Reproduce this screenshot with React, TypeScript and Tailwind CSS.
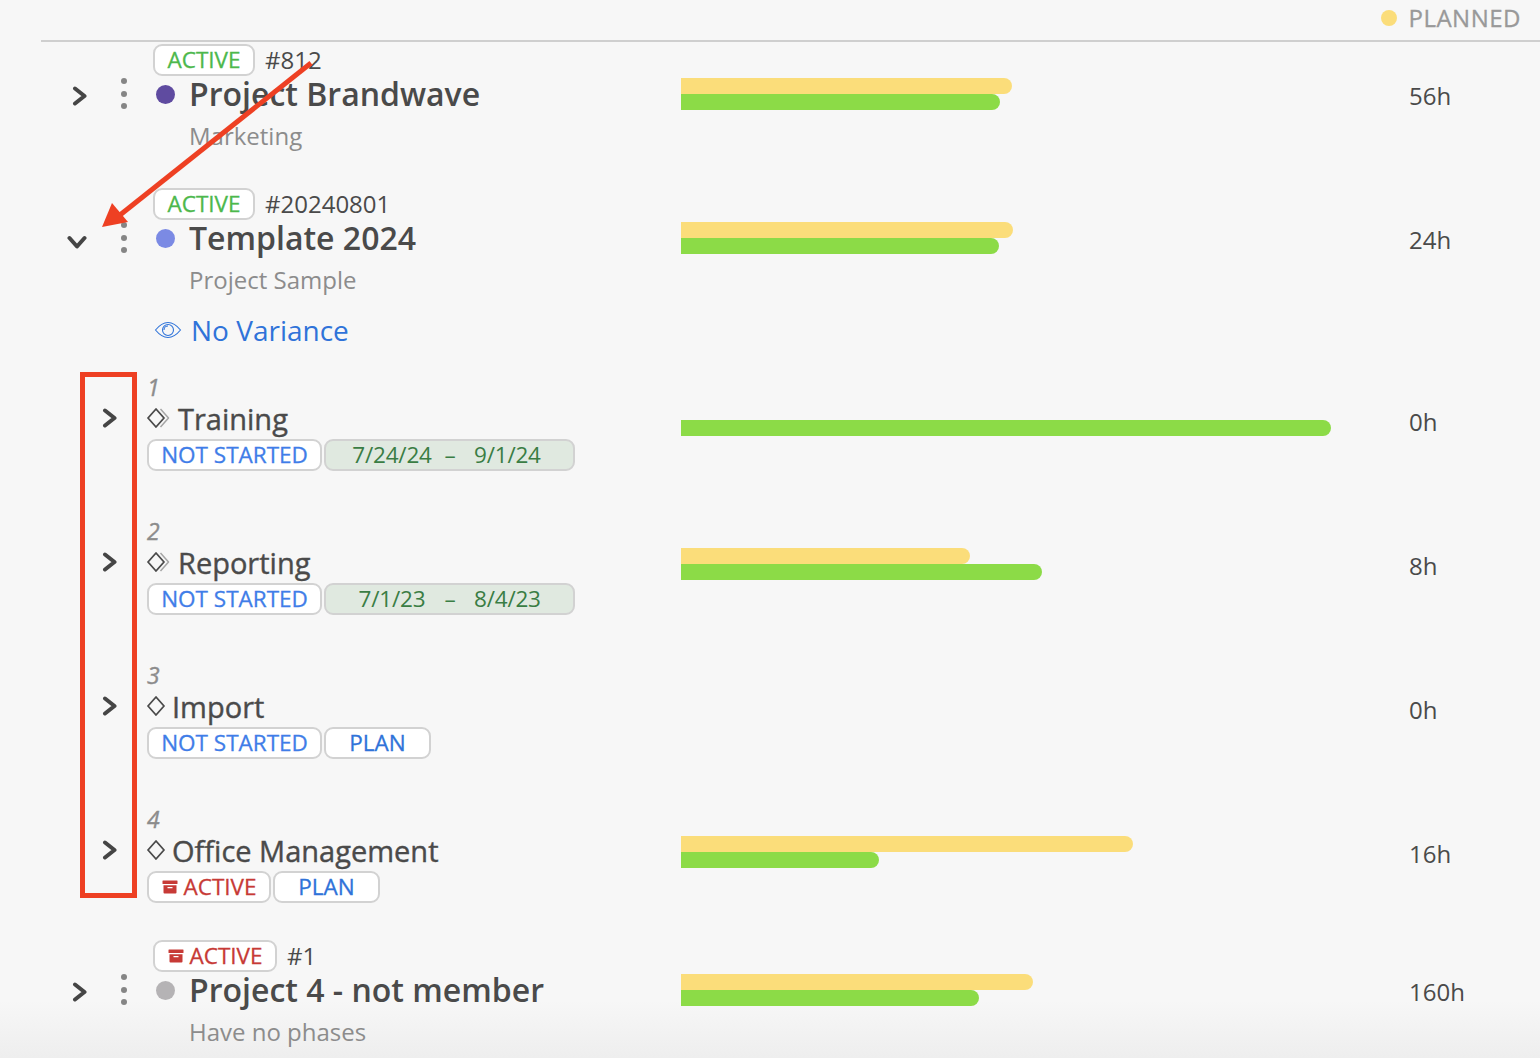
import React from 'react';

const Chevron = ({ down }: { down?: boolean }) => (
  <svg width="20" height="20" viewBox="0 0 20 20" fill="none" stroke="#454545" strokeWidth="4" strokeLinecap="round" strokeLinejoin="round">
    <path d={down ? 'M2.500 5l7.500 8.500 7.500-8.500' : 'M4 2.500l9.500 7.500-9.500 7.500'} />
  </svg>
);

const Kebab = () => (
  <div className="flex flex-col gap-[6.5px]">
    <span className="w-[6px] h-[6px] rounded-full bg-[#858585]" />
    <span className="w-[6px] h-[6px] rounded-full bg-[#858585]" />
    <span className="w-[6px] h-[6px] rounded-full bg-[#858585]" />
  </div>
);

const ArchiveIcon = () => (
  <svg width="16" height="16" viewBox="0 0 16 16" fill="#c73a36">
    <rect x="0.5" y="1.500" width="15" height="3.500" rx="0.5" />
    <path d="M1.500 6.200h13v7.300a1 1 0 0 1-1 1h-11a1 1 0 0 1-1-1zM5.500 8v1.200h5V8z" fillRule="evenodd" />
  </svg>
);

const PhaseIcon = ({ nested }: { nested?: boolean }) => (
  <svg width={nested ? 24 : 18} height="20" viewBox={nested ? '0 0 24 20' : '0 0 18 20'} fill="none" strokeLinejoin="round">
    <path d="M9 1l8 9-8 9-8-9z" stroke="#4a4a4a" strokeWidth="1.800" />
    {nested && <path d="M13.500 1l8 9-8 9" stroke="#a5a5a5" strokeWidth="1.500" />}
  </svg>
);

const Tag = ({ className, children }: { className?: string; children: React.ReactNode }) => (
  <span className={`inline-flex items-center justify-center h-[32px] rounded-[9px] border-2 border-[#d2d2d2] bg-white text-[22.5px] [-webkit-text-stroke:0.3px] leading-none ${className ?? ''}`}>
    {children}
  </span>
);

const ActiveRed = ({ className }: { className?: string }) => (
  <Tag className={`gap-[6px] text-[#c73a36] ${className ?? ''}`}>
    <ArchiveIcon />
    ACTIVE
  </Tag>
);

const Bars = ({ planned, actual, top }: { planned: number; actual: number; top: string }) => (
  <div className={`w-[728px] shrink-0 flex flex-col ${top}`}>
    <div className="h-4 rounded-r-full bg-[#fbdd7a]" style={{ width: planned }} />
    <div className="h-4 rounded-r-full bg-[#8cdb47]" style={{ width: actual }} />
  </div>
);

const Hours = ({ value, top }: { value: string; top: string }) => (
  <div className={`text-[24px] leading-[32px] text-[#4a4a4a] ${top}`}>{value}</div>
);

const ProjectRow = ({
  tag, code, title, sub, dot, planned, actual, hours, open, extra,
}: {
  tag: React.ReactNode;
  code: string;
  title: string;
  sub: string;
  dot: string;
  planned: number;
  actual: number;
  hours: string;
  open?: boolean;
  extra?: React.ReactNode;
}) => (
  <div className="flex">
    <div className="w-[681px] shrink-0 flex">
      <div className={`w-[108px] shrink-0 ${open ? 'pl-[67px] pt-[47px]' : 'pl-[71px] pt-[44px]'}`}>
        <Chevron down={open} />
      </div>
      <div className="w-[45px] shrink-0 pl-[13px] pt-[36px]"><Kebab /></div>
      <div className="flex flex-col">
        <div className="flex items-center gap-[10px] h-[32px] mt-[2px] text-[24px] text-[#4a4a4a]">
          {tag}
          <span className="mt-[-1px]">{code}</span>
        </div>
        <div className="flex items-center h-[36px]">
          <span className={`w-[19px] h-[19px] ml-[3px] rounded-full ${dot}`} />
          <span className="ml-[14px] text-[32px] font-semibold text-[#4a4a4a] leading-none">{title}</span>
        </div>
        <div className="pl-[36px] mt-[8px] text-[24px] leading-[32px] text-[#8c8c8c]">{sub}</div>
        {extra}
      </div>
    </div>
    <Bars planned={planned} actual={actual} top="pt-[36px]" />
    <Hours value={hours} top="pt-[38px]" />
  </div>
);

const PhaseRow = ({
  num, title, nested, tags, planned, actual, hours,
}: {
  num: string;
  title: string;
  nested?: boolean;
  tags: React.ReactNode;
  planned: number;
  actual: number;
  hours: string;
}) => (
  <div className="flex h-[144px]">
    <div className="w-[681px] shrink-0 flex">
      <div className="w-[147px] shrink-0 pl-[101px] pt-[46px]"><Chevron /></div>
      <div className="flex flex-col">
        <div className="h-[30px] mt-[10px] text-[23px] leading-[30px] italic [-webkit-text-stroke:0.4px] text-[#8c8c8c]">{num}</div>
        <div className="flex items-center h-[36px] mt-[-2px]">
          <PhaseIcon nested={nested} />
          <span className="ml-[7px] text-[29px] font-medium [-webkit-text-stroke:0.4px] leading-none text-[#4a4a4a]">{title}</span>
        </div>
        <div className="flex gap-[2px] mt-[3px]">{tags}</div>
      </div>
    </div>
    <Bars planned={planned} actual={actual} top="pt-[42px]" />
    <Hours value={hours} top="pt-[44px]" />
  </div>
);

const NotStarted = () => <Tag className="w-[175px] text-[#3f7de8]">NOT STARTED</Tag>;
const Plan = () => <Tag className="w-[107px] text-[#2f73d9]">PLAN</Tag>;
const Dates = ({ from, to }: { from: string; to: string }) => (
  <Tag className="w-[251px] !justify-start !bg-[#e0e9e0] ![-webkit-text-stroke:0px] tracking-[-0.2px] text-[#3a7d44]">
    <span className="ml-[19px] w-[94px] text-center">{from}</span>
    <span className="w-[22px] text-center">–</span>
    <span className="ml-[13px]">{to}</span>
  </Tag>
);

export default function App() {
  return (
    <div className="relative w-[1540px] h-[1058px] overflow-hidden bg-[linear-gradient(to_bottom,#f7f7f7_1000px,#eeeeee_1058px)] font-['Open_Sans',sans-serif]">
      <div className="ml-[41px] h-[42px] pb-[4px] border-b-2 border-[#cfcfcf] flex items-center justify-end pr-[19px]">
        <span className="w-4 h-4 rounded-full bg-[#fbdd7a] mr-[11px]" />
        <span className="text-[24px] [-webkit-text-stroke:0.3px] text-[#999999] tracking-[0.5px]">PLANNED</span>
      </div>

      <div className="h-[144px]">
        <ProjectRow
          tag={<Tag className="w-[102px] text-[#4cb84c]">ACTIVE</Tag>}
          code="#812"
          title="Project Brandwave"
          sub="Marketing"
          dot="bg-[#5f4ba0]"
          planned={331}
          actual={319}
          hours="56h"
        />
      </div>
      <div className="h-[176px]">
        <ProjectRow
          tag={<Tag className="w-[102px] text-[#4cb84c]">ACTIVE</Tag>}
          code="#20240801"
          title="Template 2024"
          sub="Project Sample"
          dot="bg-[#7b8ae4]"
          planned={332}
          actual={318}
          hours="24h"
          open
          extra={
            <div className="flex items-center h-[40px] mt-[14px] text-[28px] text-[#2f73d9]">
              <svg width="28" height="20" viewBox="0 0 28 20" fill="none" stroke="#2f73d9" strokeWidth="1.100" className="ml-[1px]">
                <path d="M1.500 10C6 4.500 10 2.500 14 2.500S22 4.500 26.500 10C22 15.500 18 17.500 14 17.500S6 15.500 1.500 10z" />
                <circle cx="14" cy="10" r="5.500" />
                <path d="M10 10a4 4 0 0 1 4-4" />
              </svg>
              <span className="ml-[9px]">No Variance</span>
            </div>
          }
        />
      </div>

      <PhaseRow num="1" title="Training" nested planned={0} actual={650} hours="0h"
        tags={<><NotStarted /><Dates from="7/24/24" to="9/1/24" /></>} />
      <PhaseRow num="2" title="Reporting" nested planned={289} actual={361} hours="8h"
        tags={<><NotStarted /><Dates from="7/1/23" to="8/4/23" /></>} />
      <PhaseRow num="3" title="Import" planned={0} actual={0} hours="0h"
        tags={<><NotStarted /><Plan /></>} />
      <PhaseRow num="4" title="Office Management" planned={452} actual={198} hours="16h"
        tags={<><ActiveRed className="w-[124px]" /><Plan /></>} />

      <ProjectRow
        tag={<ActiveRed className="w-[124px]" />}
        code="#1"
        title="Project 4 - not member"
        sub="Have no phases"
        dot="bg-[#b5b3b5]"
        planned={352}
        actual={298}
        hours="160h"
      />

      {/* annotation overlays */}
      <div className="absolute left-[80px] top-[372px] w-[57px] h-[526px] border-[5px] border-[#ee4023]" />
      <svg className="absolute left-0 top-0 pointer-events-none" width="400" height="260" viewBox="0 0 400 260">
        <path d="M311 63L120 215" stroke="#ee4023" strokeWidth="5" />
        <path d="M102 227L112 203L128 222z" fill="#ee4023" />
      </svg>
    </div>
  );
}
